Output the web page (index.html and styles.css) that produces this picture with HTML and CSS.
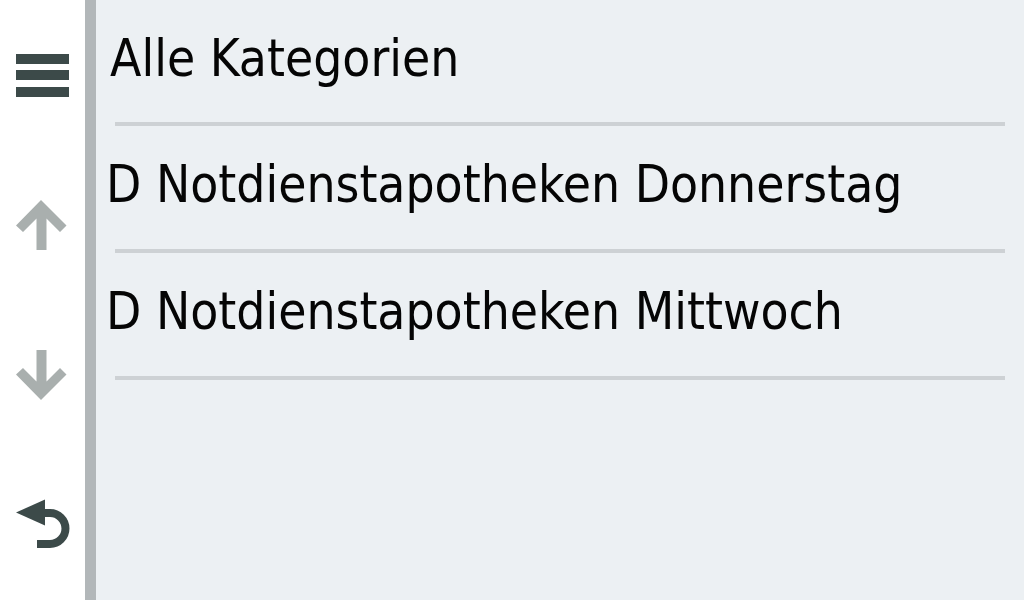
FILE: index.html
```html
<!DOCTYPE html>
<html lang="de">
<head>
<meta charset="utf-8">
<title>Kategorien</title>
<link rel="stylesheet" href="styles.css">
</head>
<body>
<div class="screen">
  <nav class="sidebar">
    <div class="btn btn-menu">
      <svg width="54" height="44" viewBox="16 54 54 44">
        <rect x="16" y="54" width="53" height="10" fill="#3c4a49"/>
        <rect x="16" y="70" width="53" height="10" fill="#3c4a49"/>
        <rect x="16" y="87" width="53" height="10" fill="#3c4a49"/>
      </svg>
    </div>
    <div class="btn btn-up">
      <svg width="54" height="52" viewBox="14 199 54 52">
        <polygon points="41,200 66.5,225.5 60,232 46.5,218.5 46.5,250 36.5,250 36.5,218.5 23,232 16,225.5" fill="#a9afae"/>
      </svg>
    </div>
    <div class="btn btn-down">
      <svg width="54" height="52" viewBox="14 349 54 52">
        <polygon points="41,400 66.5,374.5 60,368 46.5,381.5 46.5,350 36.5,350 36.5,381.5 23,368 16,374.5" fill="#a9afae"/>
      </svg>
    </div>
    <div class="btn btn-back">
      <svg width="56" height="52" viewBox="14 498 56 52">
        <polygon points="16,512.5 45,499.5 45,525.5" fill="#3c4a49"/>
        <path d="M40 513 H50 A15.5 15.5 0 0 1 50 544 H37" fill="none" stroke="#3c4a49" stroke-width="8"/>
      </svg>
    </div>
  </nav>
  <main class="list">
    <div class="row row-header">
      <div class="label label-header">Alle Kategorien</div>
    </div>
    <div class="row">
      <div class="label">D Notdienstapotheken Donnerstag</div>
    </div>
    <div class="row">
      <div class="label">D Notdienstapotheken Mittwoch</div>
    </div>
  </main>
</div>
</body>
</html>
```

FILE: styles.css
```css
html, body {
  margin: 0;
  padding: 0;
}

body {
  width: 1024px;
  height: 600px;
  overflow: hidden;
  font-family: "DejaVu Sans Condensed", "DejaVu Sans", "Liberation Sans", sans-serif;
  font-stretch: condensed;
}

.screen {
  display: flex;
  width: 1024px;
  height: 600px;
}

.sidebar {
  width: 85px;
  flex: none;
  background: #ffffff;
  border-right: 11px solid #b2b7b9;
  position: relative;
}

.btn {
  position: absolute;
  line-height: 0;
}

.btn svg {
  display: block;
}

.btn-menu { left: 16px; top: 54px; }
.btn-up { left: 14px; top: 199px; }
.btn-down { left: 14px; top: 349px; }
.btn-back { left: 14px; top: 498px; }

.list {
  flex: 1;
  background: #ecf0f3;
  display: flex;
  flex-direction: column;
}

.row {
  height: 127px;
  flex: none;
  position: relative;
}

.row::after {
  content: "";
  position: absolute;
  left: 19px;
  right: 19px;
  bottom: 0;
  height: 4px;
  background: #cdd1d4;
}

.row-header {
  height: 126px;
}

.label {
  font-size: 51px;
  line-height: 58px;
  color: #050505;
  white-space: nowrap;
  padding-top: 30px;
  padding-left: 10px;
}

.label-header {
  padding-left: 14px;
}
```
